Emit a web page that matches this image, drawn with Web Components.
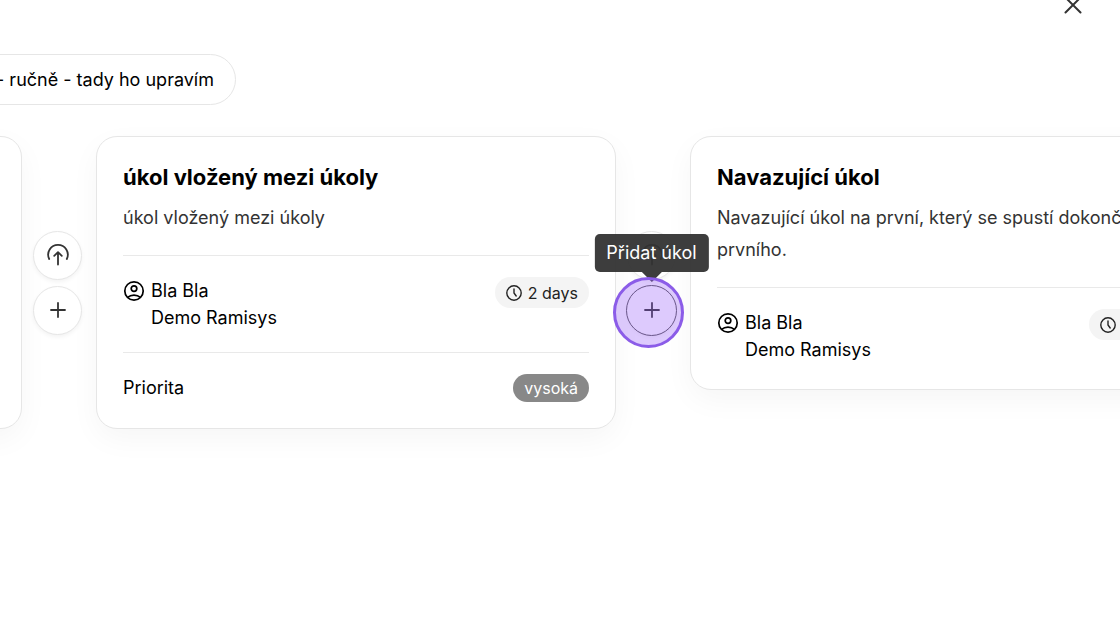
<!DOCTYPE html>
<html lang="cs">
<head>
<meta charset="utf-8">
<title>Úkoly</title>
<style>
  html, body { margin: 0; background: #fff; }
  body {
    font-family: Inter, "Liberation Sans", sans-serif;
    font-size: 18px;
    line-height: 27px;
    color: #000;
    overflow: hidden;
  }
</style>
</head>
<body>

<task-board>
  <span slot="note">- ručně - tady ho upravím</span>
  <task-card></task-card>
  <task-connector></task-connector>
  <task-card heading="úkol vložený mezi úkoly" user="Bla Bla" company="Demo Ramisys" duration="2 days" priority="vysoká">
    úkol vložený mezi úkoly
  </task-card>
  <task-connector active tooltip="Přidat úkol"></task-connector>
  <task-card heading="Navazující úkol" user="Bla Bla" company="Demo Ramisys" duration="2 days">
    Navazující úkol na první, který se spustí dokončením prvního.
  </task-card>
</task-board>

<script>
class TaskBoard extends HTMLElement {

  constructor() {
    super();
    this._root = this.attachShadow({ mode: "open" });
    this._root.innerHTML = `
      <style>
        :host { display: block; overflow: hidden; min-height: 100vh; }
        header {
          display: flex;
          justify-content: flex-end;
          margin-top: -6px;
          padding-right: 36px;
        }
        button {
          width: 22px;
          height: 22px;
          padding: 0;
          border: 0;
          background: none;
          color: #333;
        }
        svg { display: block; }
        /* the board is scrolled to its second card */
        main {
          display: flex;
          flex-direction: column;
          align-items: flex-start;
          gap: 31px;
          width: max-content;
          margin: 38px 0 0 -498px;
        }
        #note {
          display: flex;
          align-items: center;
          justify-content: flex-end;
          box-sizing: border-box;
          min-width: 734px;
          height: 51px;
          padding: 0 21px;
          border: 1px solid #e6e6e6;
          border-radius: 26px;
        }
        #flow { display: flex; align-items: flex-start; }
      </style>
      <header>
        <button aria-label="Zavřít">
          <svg width="22" height="22" viewBox="0 0 22 22" fill="none" stroke="currentColor" stroke-width="2" stroke-linecap="round"><path d="M3.5 3.5l15 15M18.5 3.5l-15 15"/></svg>
        </button>
      </header>
      <main>
        <div id="note"><slot name="note"></slot></div>
        <div id="flow"><slot></slot></div>
      </main>
    `;
    this._root.querySelector("button").addEventListener("click", () => this.dispatchEvent(new Event("close")));
  }
}

class TaskCard extends HTMLElement {

  constructor() {
    super();
    const heading = this.getAttribute("heading") || "";
    const user = this.getAttribute("user") || "";
    const company = this.getAttribute("company") || "";
    const duration = this.getAttribute("duration") || "";
    const priority = this.getAttribute("priority") || "";
    this._root = this.attachShadow({ mode: "open" });
    this._root.innerHTML = `
      <style>
        :host {
          display: block;
          flex: none;
          align-self: flex-start;
          box-sizing: border-box;
          width: 520px;
          padding: 26px;
          border: 1px solid #e6e6e6;
          border-radius: 21px;
          background: #fff;
          box-shadow: 0 10px 30px rgba(0,0,0,.04);
        }
        :host(:not([heading])) { align-self: stretch; }
        h2 { margin: 0 0 11px; font-size: 22px; line-height: 28px; font-weight: 700; }
        p { margin: 0; line-height: 32px; color: #333; }
        .row {
          display: flex;
          justify-content: space-between;
          align-items: flex-start;
          margin-top: 21px;
          padding-top: 21px;
          border-top: 1px solid #e9e9e9;
          line-height: 28px;
        }
        .user { display: flex; gap: 6px; line-height: 27px; }
        .user svg { margin-top: 3px; }
        .time {
          display: flex;
          align-items: center;
          gap: 6px;
          height: 31px;
          padding: 0 11px;
          border-radius: 16px;
          background: #f4f4f4;
          color: #222;
          font-size: 16px;
        }
        .tag {
          padding: 0 11px;
          border-radius: 14px;
          background: #888;
          color: #fff;
          font-size: 16px;
        }
      </style>
      ${heading ? `
      <h2>${heading}</h2>
      <p><slot></slot></p>
      <div class="row">
        <div class="user">
          <svg width="22" height="22" viewBox="0 0 22 22" fill="none" stroke="currentColor" stroke-width="1.7"><circle cx="11" cy="11" r="9.2"/><circle cx="11" cy="8.6" r="2.8"/><path d="M4.6 17.4c1.7-1.5 3.9-2.3 6.4-2.3s4.7.8 6.4 2.3"/></svg>
          <div>${user}<br>${company}</div>
        </div>
        <div class="time">
          <svg width="16" height="16" viewBox="0 0 16 16" fill="none" stroke="currentColor" stroke-width="1.4" stroke-linecap="round"><circle cx="8" cy="8" r="7.2"/><path d="M8 4v4l2.200 3"/></svg>
          <span>${duration}</span>
        </div>
      </div>` : ""}
      ${priority ? `<div class="row"><span>Priorita</span><span class="tag">${priority}</span></div>` : ""}
    `;
  }
}

class TaskConnector extends HTMLElement {

  constructor() {
    super();
    const tooltip = this.getAttribute("tooltip") || "";
    this._root = this.attachShadow({ mode: "open" });
    this._root.innerHTML = `
      <style>
        :host {
          display: flex;
          flex: none;
          flex-direction: column;
          justify-content: center;
          align-self: center;
          gap: 6px;
          padding: 0 14px 0 11px;
        }
        :host([active]) { position: relative; z-index: 1; }
        button {
          display: grid;
          place-items: center;
          width: 49px;
          height: 49px;
          padding: 0;
          border: 1px solid #e6e6e6;
          border-radius: 50%;
          background: #fff;
          box-shadow: 0 2px 4px rgba(0,0,0,.05);
          color: #333;
        }
        .add { position: relative; }
        :host([active]) .add button { outline: 1px solid #555; border-color: #fff; }
        /* click marker and tooltip lie over the cards */
        .marker {
          position: absolute;
          top: -9px;
          left: -14px;
          box-sizing: border-box;
          width: 71px;
          height: 71px;
          border: 3px solid #8b5ce8;
          border-radius: 50%;
          background: rgba(150,90,250,.32);
          pointer-events: none;
        }
        .tip {
          position: absolute;
          bottom: 63px;
          left: 50%;
          transform: translateX(-50%);
          padding: 0 12px;
          border-radius: 5px;
          background: rgba(51,51,51,.95);
          color: #fff;
          line-height: 38px;
          white-space: nowrap;
        }
        .tip::after {
          content: "";
          position: absolute;
          top: 100%;
          left: 50%;
          margin-left: -10px;
          border: 10px solid transparent;
          border-top-color: rgba(51,51,51,.95);
          border-bottom: 0;
        }
      </style>
      <button aria-label="Nahrát">
        <svg width="24" height="24" viewBox="0 0 24 24" fill="none" stroke="currentColor" stroke-width="1.8" stroke-linecap="round" stroke-linejoin="round"><path d="M3.2 16A9.8 9.8 0 1 1 20.8 16M12 21.500V9.300M8.200 12.800l3.800-3.700 3.800 3.700"/></svg>
      </button>
      <div class="add">
        <button aria-label="Přidat úkol">
          <svg width="22" height="22" viewBox="0 0 22 22" fill="none" stroke="currentColor" stroke-width="1.8" stroke-linecap="round"><path d="M11 4v14M4 11h14"/></svg>
        </button>
        ${tooltip ? `<div class="tip" role="tooltip">${tooltip}</div><div class="marker"></div>` : ""}
      </div>
    `;
    this._root.querySelector(".add button").addEventListener("click", () => this.dispatchEvent(new Event("add")));
  }
}

window.customElements.define("task-card", TaskCard);
window.customElements.define("task-connector", TaskConnector);
window.customElements.define("task-board", TaskBoard);
</script>
</body>
</html>
